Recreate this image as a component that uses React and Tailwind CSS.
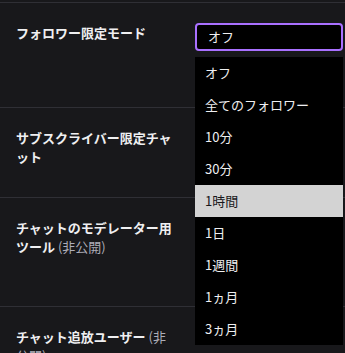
import React, { useState } from 'react'

const options = ['オフ', '全てのフォロワー', '10分', '30分', '1時間', '1日', '1週間', '1ヵ月', '3ヵ月']

const Row = ({ height, children, right }) => (
  <div className={`flex border-b border-[#2f2f35] ${height}`}>
    <div className="w-[195px] shrink-0 pl-4 pt-5">
      <div className="w-[160px] text-[13px] font-bold leading-[19px] text-[#efeff1]">{children}</div>
    </div>
    <div className="flex-1 pt-5 pr-[2px]">{right}</div>
  </div>
)

const Private = () => <span className="font-normal text-[#adadb8]"> (非公開)</span>

export default function App() {
  const [value] = useState('オフ')
  const [hovered] = useState('1時間')

  return (
    <div
      className="h-[353px] w-[345px] overflow-hidden bg-[#18181b] pt-[2px]"
      style={{ fontFamily: '"Noto Sans CJK JP", "Noto Sans", sans-serif' }}
    >
      <div className="border-t border-[#2f2f35]">
        <Row
          height="h-[105px]"
          right={
            <div className="relative">
              <div className="flex h-[28px] items-center rounded-[4px] border-2 border-[#a970ff] bg-black pl-[11px] text-[13px] text-[#efeff1]">
                {value}
              </div>
              <ul className="absolute left-0 right-0 top-[34px] z-10 bg-black py-0">
                {options.map((opt) => (
                  <li
                    key={opt}
                    className={`flex h-8 items-center pl-[10px] text-[13px] ${
                      opt === hovered ? 'bg-[#d3d3d3] text-[#18181b]' : 'text-[#efeff1]'
                    }`}
                  >
                    {opt}
                  </li>
                ))}
              </ul>
            </div>
          }
        >
          フォロワー限定モード
        </Row>
        <Row height="h-[90px]">サブスクライバー限定チャット</Row>
        <Row height="h-[109px]">
          チャットのモデレーター用ツール
          <Private />
        </Row>
        <Row height="h-[120px]">
          チャット追放ユーザー
          <Private />
        </Row>
      </div>
    </div>
  )
}
